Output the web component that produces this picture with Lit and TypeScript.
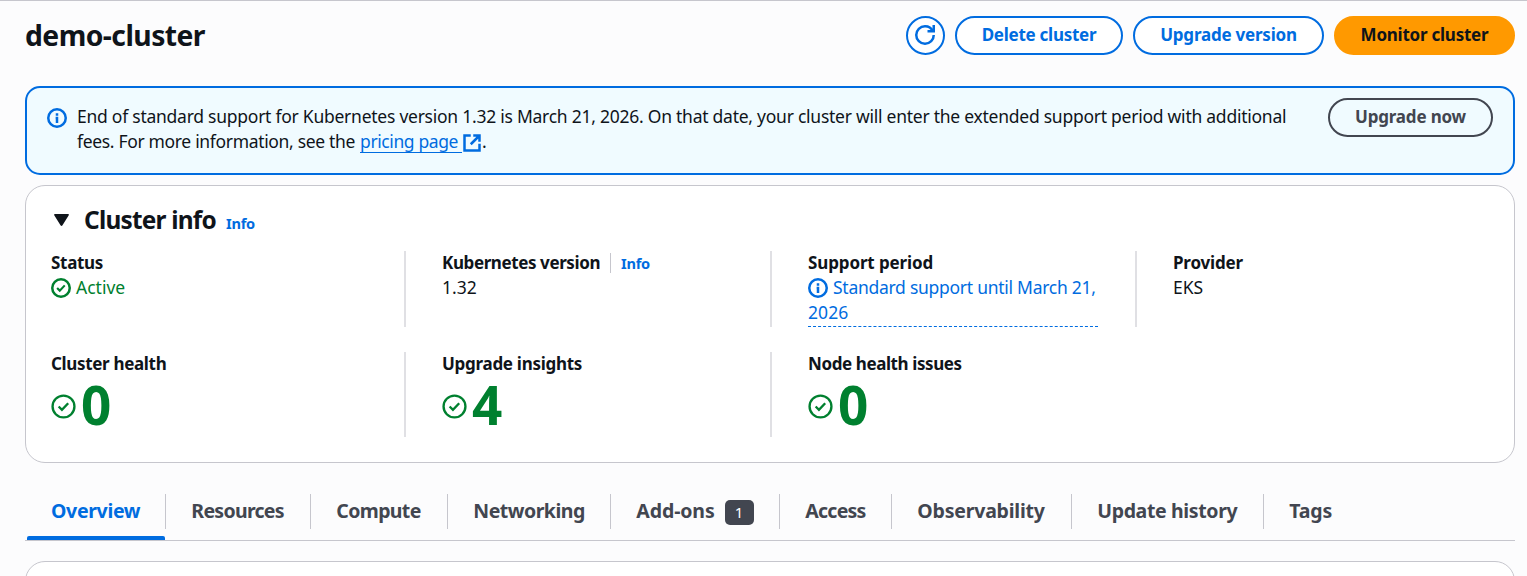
import { LitElement, html, css, svg, TemplateResult } from "lit";

// Tracking (letter-spacing, px) is kept beside each label and passed as --t.
const txt = (s: string, t: number) => html`<span class="tx" style="--t:${t}px">${s}</span>`;

const icon = (body: TemplateResult, cls = "") =>
  html`<svg class="icon ${cls}" viewBox="0 0 16 16" fill="none" stroke="currentColor" stroke-width="2">${body}</svg>`;
const check = (cls = "") => icon(svg`<circle cx="8" cy="8" r="7"/><path class="tick" d="m4.9 8 2.1 2.1 4-4.2"/>`, cls);
const info = () => icon(svg`<circle cx="8" cy="8" r="7"/><path d="M8 12V7.9H6.9M8 6.1V4.1"/>`);
const refresh = icon(svg`<path d="M10 5h5V0"/><path d="M15 8a6.957 6.957 0 0 1-7 7 6.957 6.957 0 0 1-7-7 6.957 6.957 0 0 1 7-7 6.87 6.87 0 0 1 6.3 4"/>`);
const external = icon(svg`<path d="M14 8.5V14H2V2h5M9 2h5v5M7 9l7-7"/>`, "ext");

const tabs: [string, number, number?][] = [
  ["Overview", -0.33], ["Resources", -0.7], ["Compute", -0.63], ["Networking", -0.5],
  ["Add-ons", -0.1, 1], ["Access", -0.75], ["Observability", -0.2], ["Update history", -0.36], ["Tags", -0.2],
];

class AppRoot extends LitElement {
  static styles = css`
    :host { display: block; height: 576px; overflow: hidden; box-sizing: border-box; border-top: 1px solid #c6c6cd;
      background: #fcfcfd; color: #0f141a; font: 400 17.5px/25px "Noto Sans", "Open Sans", sans-serif; padding: 15px 12px 0 25px; }
    * { box-sizing: border-box; }
    .tx { letter-spacing: var(--t); white-space: nowrap; }
    .icon { width: 20px; height: 20px; flex: none; display: block; overflow: visible; }
    .tick { stroke-width: 1.7; }
    .header { display: flex; justify-content: space-between; height: 70px; align-items: flex-start; }
    h1 { margin: 0; font-size: 28.3px; font-weight: 700; line-height: 39px; }
    .actions { display: flex; gap: 10px; }
    .btn { height: 39px; border: 2px solid #006ce0; border-radius: 20px; color: #006ce0; background: #fff; font-weight: 700; font-size: 17px;
      display: flex; align-items: center; justify-content: center; padding: 0 0 2px; line-height: 25px; }
    .round { width: 39px; padding: 0 1px 1px 0; }
    .delete { width: 168px; } .upgrade { width: 191px; }
    .monitor { width: 181px; background: #ff9900; border-color: #ff9900; color: #0f141a; }
    .now { width: 165px; background: none; color: #424650; border-color: #424650; }
    .alert { display: flex; height: 89px; border: 2px solid #006ce0; border-radius: 15px; background: #f0fbff; padding: 10px 20px; }
    .alert > .icon { margin-top: 10px; color: #006ce0; }
    .message { flex: 1; padding: 6px 0 0 10px; }
    .line { display: flex; height: 25px; }
    a { color: #006ce0; display: flex; margin-left: 5px; }
    .linktext { border-bottom: 1px solid #006ce0; padding-right: 4px; height: 24px; }
    .ext { margin-top: 4px; height: 20px; }
    .card { margin-top: 10px; height: 278px; border: 1px solid #c6c6cd; border-radius: 20px; background: #fff; padding: 17px 0 0 25px; }
    .title { display: flex; align-items: baseline; height: 48px; }
    .caret { width: 15px; height: 12px; margin: 11px 15px 0 3px; fill: currentColor; align-self: flex-start; }
    h2 { margin: 0; font-size: 24.4px; font-weight: 700; line-height: 33px; }
    .info { color: #006ce0; font-size: 14.6px; font-weight: 700; }
    .title .info { margin-left: 10px; }
    .grid { display: grid; grid-template-columns: 355px 366px 365px 340px; grid-template-rows: 76px 85px; row-gap: 25px; }
    .cell { border-right: 2px solid #e0e0e4; padding-left: 36px; }
    .cell:nth-child(4n+1) { padding-left: 0; }
    .cell.last { border: 0; }
    .label { font-weight: 700; font-size: 17px; display: flex; align-items: baseline; margin-top: -1px; height: 25px; }
    .label .info { margin-left: 10px; padding-left: 10px; border-left: 1px solid #c6c6cd; line-height: 20px; }
    .row { display: flex; gap: 5px; align-items: center; height: 25px; }
    .green { color: #00802f; }
    .period { width: 290px; height: 52px; color: #006ce0; border-bottom: 1px dashed #006ce0; }
    .big { height: 58px; gap: 5px; color: #00802f; font-size: 53px; font-weight: 700; line-height: 58px; }
    .big .icon { width: 25px; height: 25px; stroke-width: 1.5; margin-top: 2px; }
    .big .tick { stroke-width: 1.5; }
    .tabs { display: grid; grid-template-columns: 139px 145px 137px 163px 169px 112px 180px 192px auto;
      margin-top: 21px; padding-left: 2px; height: 57px; border-bottom: 1px solid #c6c6cd; }
    .tab { position: relative; padding-top: 10px; height: 56px; }
    .tabtext { display: flex; align-items: center; height: 35px; padding: 0 0 2px 25.3px; border-right: 1px solid #c6c6cd;
      font-size: 19.5px; font-weight: 700; color: #424650; }
    .tab:last-child .tabtext { border: 0; }
    .tab:first-child .tabtext { color: #006ce0; padding-left: 24px; }
    .tab:first-child::after { content: ""; position: absolute; left: 0; right: 1px; bottom: 0; height: 4px; border-radius: 2px 2px 0 0; background: #006ce0; }
    .badge { width: 29px; height: 25px; margin: 3px 0 0 10px; background: #424650; color: #fff; border-radius: 5px; font: 400 15px/25px "Noto Sans", sans-serif; text-align: center; }
    .next { margin-top: 20px; }
  `;

  cell(label: TemplateResult, body: TemplateResult, last = false) {
    return html`<div class="cell ${last ? "last" : ""}"><div class="label">${label}</div>${body}</div>`;
  }
  count(n: number) {
    return html`<div class="row big">${check()}<span class="num">${n}</span></div>`;
  }

  render() {
    return html`
      <div class="header">
        <h1>${txt("demo-cluster", -0.55)}</h1>
        <div class="actions">
          <div class="btn round">${refresh}</div>
          <div class="btn delete">${txt("Delete cluster", -0.26)}</div>
          <div class="btn upgrade">${txt("Upgrade version", -0.22)}</div>
          <div class="btn monitor">${txt("Monitor cluster", -0.24)}</div>
        </div>
      </div>
      <div class="alert">
        ${info()}
        <div class="message">
          <div class="line">${txt("End of standard support for Kubernetes version 1.32 is March 21, 2026. On that date, your cluster will enter the extended support period with additional", -0.252)}</div>
          <div class="line">${txt("fees. For more information, see the", -0.33)}<a><span class="linktext">${txt("pricing page", -0.4)}</span>${external}</a>.</div>
        </div>
        <div class="btn now">${txt("Upgrade now", -0.18)}</div>
      </div>
      <section class="card">
        <div class="title">
          <svg class="caret" viewBox="0 0 15 12"><path d="M1 0h13q1.5 .2 .6 1.5L8.5 11.3q-1 1.2-2 0L.4 1.5Q-.5 .2 1 0z"/></svg>
          <h2>${txt("Cluster info", -0.77)}</h2><span class="info">${txt("Info", -0.25)}</span>
        </div>
        <div class="grid">
          ${this.cell(txt("Status", -0.3), html`<div class="row green">${check()}${txt("Active", 0)}</div>`)}
          ${this.cell(html`${txt("Kubernetes version", -0.4)}<span class="info">${txt("Info", -0.25)}</span>`, html`<div class="row">${txt("1.32", 0)}</div>`)}
          ${this.cell(txt("Support period", -0.13), html`<div class="period"><div class="row">${info()}${txt("Standard support until March 21,", -0.27)}</div><div class="row">${txt("2026", 0.1)}</div></div>`)}
          ${this.cell(txt("Provider", -0.2), html`<div class="row">${txt("EKS", 0)}</div>`, true)}
          ${this.cell(txt("Cluster health", -0.33), this.count(0))}
          ${this.cell(txt("Upgrade insights", -0.28), this.count(4))}
          ${this.cell(txt("Node health issues", -0.4), this.count(0), true)}
        </div>
      </section>
      <nav class="tabs">
        ${tabs.map(([s, t, n]) => html`<div class="tab"><div class="tabtext">${txt(s, t)}${n ? html`<span class="badge">${n}</span>` : ""}</div></div>`)}
      </nav>
      <section class="card next"></section>
    `;
  }
}
customElements.define("app-root", AppRoot);
